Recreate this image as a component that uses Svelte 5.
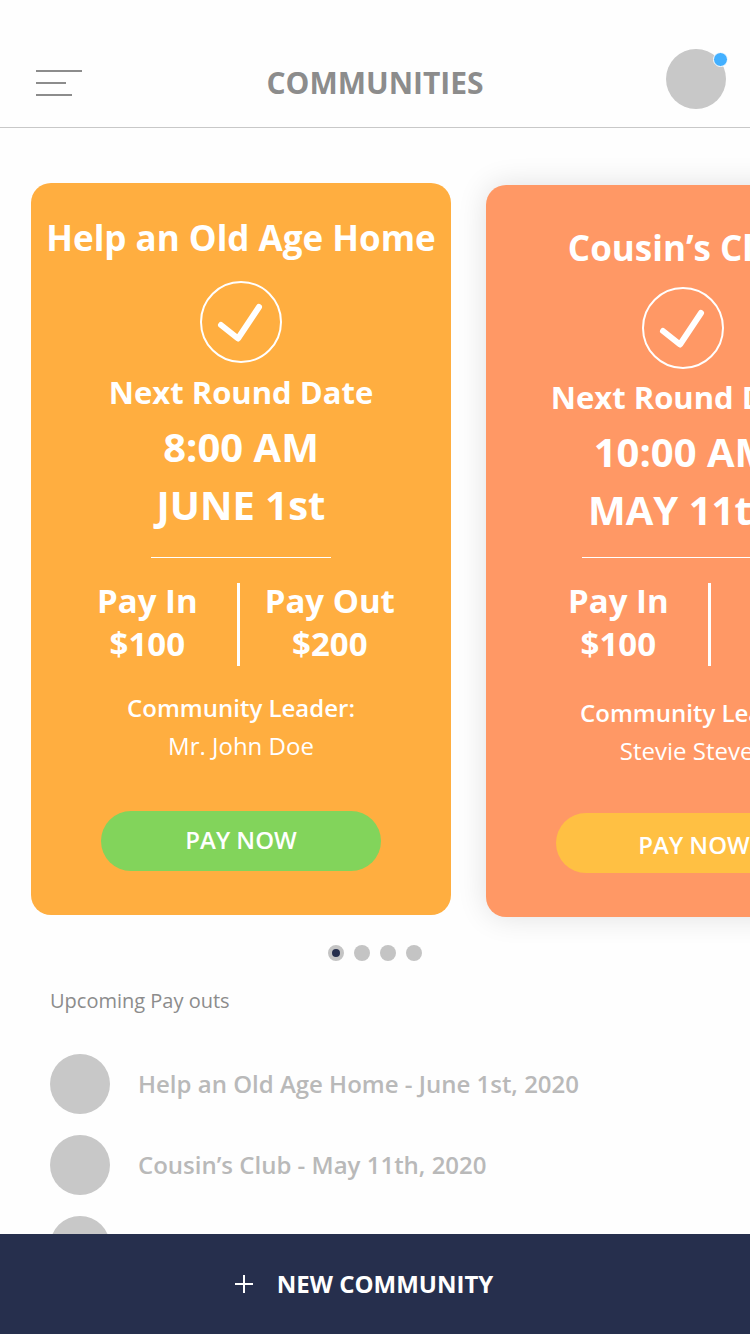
<script>
  const communities = [
    {
      name: 'Help an Old Age Home',
      time: '8:00 AM',
      date: 'JUNE 1st',
      payIn: '$100',
      payOut: '$200',
      leader: 'Mr. John Doe',
      theme: 'amber',
    },
    {
      name: 'Cousin’s Club',
      time: '10:00 AM',
      date: 'MAY 11th',
      payIn: '$100',
      payOut: '$200',
      leader: 'Stevie Steven',
      theme: 'coral',
    },
  ];

  const payouts = ['Help an Old Age Home - June 1st, 2020', 'Cousin’s Club - May 11th, 2020', ''];
  const pages = [0, 1, 2, 3];
  let current = $state(0);
</script>

<div class="app">
  <header>
    <button class="menu" aria-label="Menu">
      <svg width="46" height="26" viewBox="0 0 46 26" aria-hidden="true">
        <path d="M0 1H46M0 13H30M0 25H36" stroke="#8c8c8c" stroke-width="2" />
      </svg>
    </button>
    <h1>COMMUNITIES</h1>
    <button class="avatar" aria-label="Profile"><span class="badge"></span></button>
  </header>

  <main>
    <section class="carousel" aria-label="Communities">
      {#each communities as c}
        <article class="card {c.theme}">
          <h2>{c.name}</h2>
          <div class="round">
            <svg class="check" width="82" height="82" viewBox="0 0 82 82" fill="none" stroke="#fff" aria-hidden="true">
              <circle cx="41" cy="41" r="40" stroke-width="2" />
              <path d="M21 44L38 57.500L59 26" stroke-width="6" stroke-linecap="round" stroke-linejoin="round" />
            </svg>
            <h3>Next Round Date</h3>
            <p class="when">{c.time}</p>
            <p class="when">{c.date}</p>
          </div>
          <hr />
          <div class="pay">
            <p>Pay In<br />{c.payIn}</p>
            <span class="bar"></span>
            <p>Pay Out<br />{c.payOut}</p>
          </div>
          <div class="leader">
            <p class="label">Community Leader:</p>
            <p>{c.leader}</p>
          </div>
          <button class="pay-now">PAY NOW</button>
        </article>
      {/each}
    </section>

    <nav class="dots" aria-label="Pages">
      {#each pages as i}
        <button class:active={i === current} aria-label="Page {i + 1}" onclick={() => (current = i)}></button>
      {/each}
    </nav>

    <section class="upcoming">
      <h4>Upcoming Pay outs</h4>
      <ul>
        {#each payouts as p}
          <li><span class="thumb"></span><span class="entry">{p}</span></li>
        {/each}
      </ul>
    </section>
  </main>

  <button class="new">
    <svg width="18" height="18" viewBox="0 0 18 18" aria-hidden="true">
      <path d="M9 0V18M0 9H18" stroke="#fff" stroke-width="2" />
    </svg>
    NEW COMMUNITY
  </button>
</div>

<style>
  :global(body) {
    background: #fefefe;
  }
  .app {
    height: 100vh;
    display: flex;
    flex-direction: column;
    font-family: 'Open Sans', sans-serif;
    color: #fff;
  }
  h1, h2, h3, h4, p, ul {
    margin: 0;
    padding: 0;
  }
  button {
    border: 0;
    padding: 0;
    background: none;
    color: inherit;
    font-family: inherit;
    cursor: pointer;
  }
  header {
    flex: none;
    display: grid;
    grid-template-columns: 1fr auto 1fr;
    align-items: center;
    padding: 39px 24px 0 36px;
    height: 88px;
    border-bottom: 1px solid #c8c8c8;
  }
  .menu {
    justify-self: start;
    display: flex;
  }
  h1 {
    font-size: 30px;
    line-height: 40px;
    font-weight: 700;
    color: #8c8c8c;
    margin-right: 12px;
  }
  .avatar {
    position: relative;
    justify-self: end;
    align-self: start;
    width: 60px;
    height: 60px;
    margin-top: 10px;
    border-radius: 50%;
    background: #c8c8c8;
  }
  .badge {
    position: absolute;
    top: 3px;
    right: -2px;
    width: 13px;
    height: 13px;
    border: 1px solid #fff;
    border-radius: 50%;
    background: #43b0ff;
  }
  main {
    flex: 1;
    min-height: 0;
    overflow: hidden auto;
    scrollbar-width: none;
  }
  .carousel {
    display: flex;
    align-items: flex-start;
    gap: 35px;
    padding: 55px 31px 28px;
    overflow-x: auto;
    scrollbar-width: none;
  }
  .card {
    flex: none;
    box-sizing: border-box;
    width: 420px;
    border-radius: 20px;
    display: flex;
    flex-direction: column;
    align-items: center;
    text-align: center;
    white-space: nowrap;
  }
  .amber {
    padding: 31px 0 44px;
    background: #ffae40;
  }
  .coral {
    margin-top: 2px;
    margin-bottom: -2px;
    padding: 39px 0 44px;
    background: #ff9865;
    box-shadow: 0 0 30px rgba(0, 0, 0, 0.12);
  }
  h2 {
    font-size: 35px;
    line-height: 48px;
    font-weight: 700;
  }
  .coral h2 {
    padding-right: 26px;
  }
  .round {
    display: flex;
    flex-direction: column;
    align-items: center;
    padding: 19px 0 23px;
  }
  .coral .round {
    padding: 15px 26px 18px 0;
  }
  .check {
    margin-bottom: 7px;
  }
  .coral .check {
    margin-bottom: 6px;
  }
  h3 {
    font-size: 31px;
    line-height: 44px;
    margin-bottom: 4px;
    font-weight: 700;
  }
  .when {
    font-size: 40px;
    line-height: 58px;
    font-weight: 700;
  }
  hr {
    width: 180px;
    height: 1px;
    margin: 0;
    border: 0;
    background: #fff;
  }
  .coral hr {
    width: 228px;
  }
  .pay {
    display: flex;
    align-items: flex-start;
    padding: 21px 0 0 10px;
    font-size: 33px;
    line-height: 43px;
    font-weight: 700;
  }
  .coral .pay {
    padding-left: 60px;
  }
  .bar {
    width: 3px;
    height: 83px;
    margin: 4px 25px 0 39px;
    background: #fff;
  }
  .coral .bar {
    margin-right: 43px;
  }
  .leader {
    font-size: 24px;
    line-height: 38px;
    padding: 23px 0 46px;
  }
  .coral .leader {
    padding: 28px 4px 43px 0;
  }
  .label {
    font-weight: 600;
  }
  .pay-now {
    width: 280px;
    height: 60px;
    padding-bottom: 3px;
    border-radius: 30px;
    font-size: 24px;
    font-weight: 600;
    background: #82d45b;
  }
  .coral .pay-now {
    padding: 2px 4px 0 0;
    background: #ffc043;
  }
  .dots {
    display: flex;
    justify-content: center;
    gap: 10px;
    padding-top: 2px;
  }
  .dots button {
    width: 16px;
    height: 16px;
    border-radius: 50%;
    background: #c4c4c4;
  }
  .dots .active {
    border: 4px solid #c4c4c4;
    background: #262f4d;
  }
  .upcoming {
    padding: 26px 50px 0;
  }
  h4 {
    font-size: 20px;
    line-height: 28px;
    font-weight: 400;
    color: #8c8c8c;
  }
  ul {
    list-style: none;
    display: flex;
    flex-direction: column;
    gap: 21px;
    padding-top: 39px;
  }
  li {
    display: flex;
    align-items: center;
    gap: 28px;
    font-size: 24px;
    font-weight: 600;
    color: #b9b9b9;
  }
  .entry {
    padding-bottom: 2px;
  }
  .thumb {
    flex: none;
    width: 60px;
    height: 60px;
    border-radius: 50%;
    background: #c8c8c8;
  }
  .new {
    flex: none;
    height: 100px;
    display: flex;
    align-items: center;
    justify-content: center;
    gap: 24px;
    padding-right: 22px;
    background: #262f4d;
    font-size: 24px;
    line-height: 32px;
    font-weight: 700;
  }
</style>
